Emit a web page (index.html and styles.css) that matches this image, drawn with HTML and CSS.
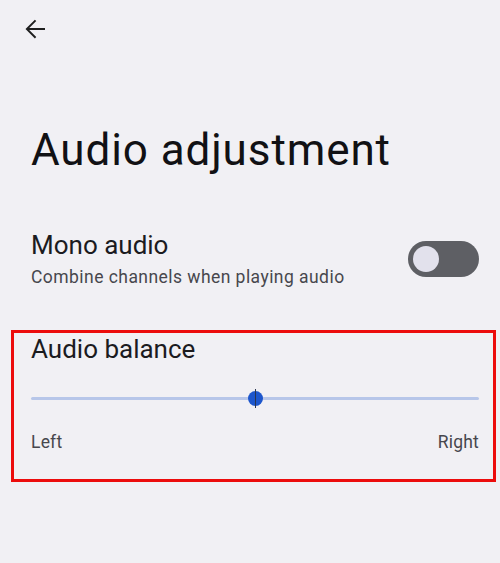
FILE: index.html
```html
<!DOCTYPE html>
<html lang="en">
<head>
<meta charset="utf-8">
<title>Audio adjustment</title>
<link rel="stylesheet" href="styles.css">
</head>
<body>
<div class="page">
  <header class="topbar">
    <svg class="back" width="30" height="30" viewBox="0 0 24 24" aria-hidden="true">
      <path d="M20 11.2H7.4l5.6-5.6L11.9 4.5 4.4 12l7.5 7.5 1.1-1.1-5.6-5.6H20z" fill="#1f1f1f"/>
    </svg>
  </header>
  <h1 class="title">Audio adjustment</h1>
  <div class="setting">
    <div class="setting-text">
      <div class="setting-name">Mono audio</div>
      <div class="setting-desc">Combine channels when playing audio</div>
    </div>
    <div class="switch"><span class="switch-thumb"></span></div>
  </div>
  <section class="balance">
    <div class="setting-name">Audio balance</div>
    <div class="slider">
      <div class="slider-track"></div>
      <div class="slider-thumb"></div>
    </div>
    <div class="slider-labels">
      <span>Left</span>
      <span>Right</span>
    </div>
  </section>
</div>
</body>
</html>
```
FILE: styles.css
```css
html, body {
  margin: 0;
  padding: 0;
  background: #f1f0f4;
}
body {
  width: 500px;
  height: 563px;
  overflow: hidden;
  font-family: Roboto, "Noto Sans", sans-serif;
  color: #1b1b1f;
}
.page {
  display: flex;
  flex-direction: column;
}
.topbar {
  height: 58px;
  display: flex;
  align-items: center;
  padding-left: 20px;
}
.back {
  display: block;
}
.title {
  margin: 66px 0 0 31px;
  font-size: 44px;
  line-height: 52px;
  font-weight: 400;
  letter-spacing: 0.9px;
  color: #111114;
}
.setting {
  margin-top: 53px;
  display: flex;
  align-items: center;
  justify-content: space-between;
  padding: 0 21px 0 31px;
}
.setting-name {
  font-size: 26px;
  line-height: 32px;
  color: #1b1b1f;
}
.setting-desc {
  margin-top: 4px;
  font-size: 17.5px;
  line-height: 24px;
  letter-spacing: 0.45px;
  color: #47474d;
}
.switch {
  width: 71px;
  height: 36px;
  border-radius: 18px;
  background: #5e5f64;
  display: flex;
  align-items: center;
  padding-left: 5px;
  box-sizing: border-box;
}
.switch-thumb {
  width: 26px;
  height: 26px;
  border-radius: 50%;
  background: #e2e1ec;
}
.balance {
  margin: 41px 4px 0 11px;
  border: 3px solid #ec0c0c;
  padding: 0 14px 25px 17px;
}
.slider {
  position: relative;
  height: 30px;
  margin-top: 18px;
}
.slider-track {
  position: absolute;
  left: 0;
  right: 0;
  top: 14px;
  height: 3px;
  border-radius: 2px;
  background: #b7c6e9;
}
.slider-thumb {
  position: absolute;
  left: 50%;
  top: 15.5px;
  width: 15px;
  height: 15px;
  margin: -7.5px 0 0 -7.5px;
  border-radius: 50%;
  background: #1d56cc;
}
.slider-thumb::before {
  content: "";
  position: absolute;
  left: 7px;
  top: -2px;
  width: 1px;
  height: 19px;
  background: #2a3550;
}
.slider-labels {
  margin-top: 17px;
  display: flex;
  justify-content: space-between;
  font-size: 17.5px;
  line-height: 24px;
  letter-spacing: 0.2px;
  color: #47474d;
}
```
